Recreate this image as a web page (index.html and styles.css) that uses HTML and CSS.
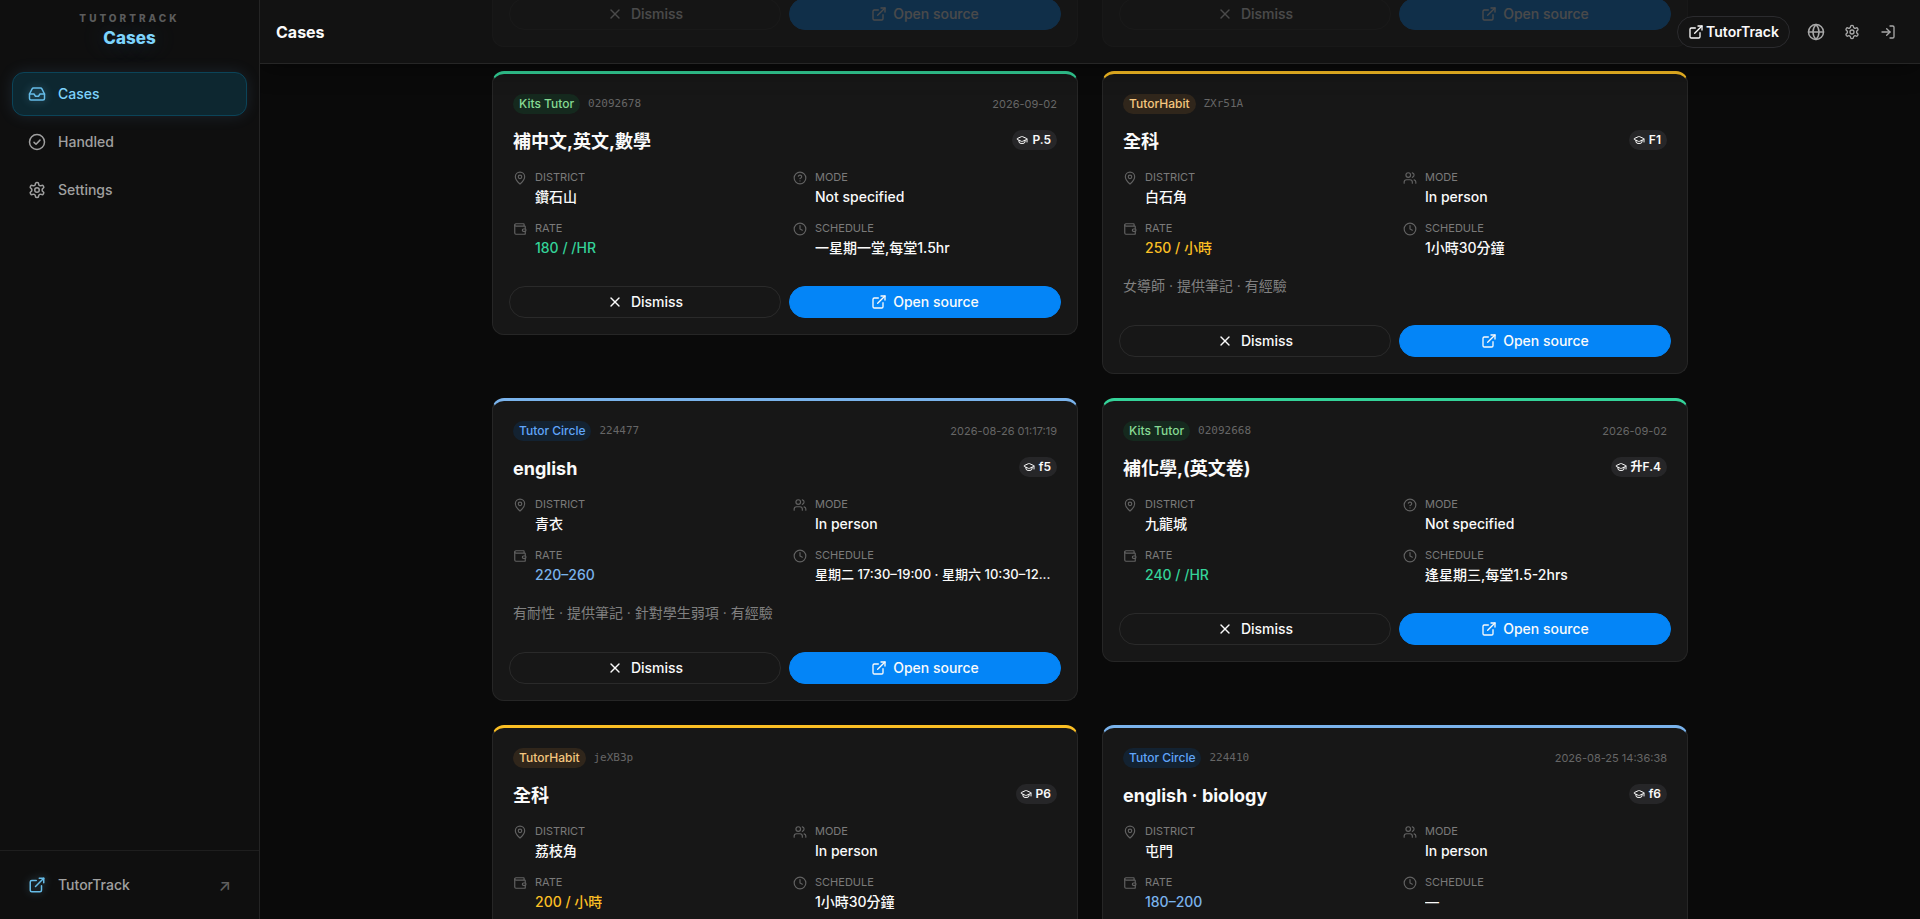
FILE: index.html
```html
<!DOCTYPE html>
<html lang="en">
<head>
    <meta charset="UTF-8">
    <meta name="viewport" content="width=device-width, initial-scale=1.0">
    <title>Cases</title>
    <link rel="stylesheet" href="styles.css">
</head>
<body>
    <!-- icons -->
    <svg class="sprite" aria-hidden="true">
        <symbol id="i-inbox" viewBox="0 0 24 24"><path d="M22 12h-6l-2 3h-4l-2-3H2"/><path d="M5.45 5.11 2 12v6a2 2 0 0 0 2 2h16a2 2 0 0 0 2-2v-6l-3.45-6.89A2 2 0 0 0 16.76 4H7.24a2 2 0 0 0-1.79 1.11z"/></symbol>
        <symbol id="i-check" viewBox="0 0 24 24"><circle cx="12" cy="12" r="10"/><path d="m8 12.5 2.7 2.5L16 9.5"/></symbol>
        <symbol id="i-gear" viewBox="0 0 24 24"><path d="M12.22 2h-.44a2 2 0 0 0-2 2v.18a2 2 0 0 1-1 1.73l-.43.25a2 2 0 0 1-2 0l-.15-.08a2 2 0 0 0-2.73.73l-.22.38a2 2 0 0 0 .73 2.73l.15.1a2 2 0 0 1 1 1.72v.51a2 2 0 0 1-1 1.74l-.15.09a2 2 0 0 0-.73 2.73l.22.38a2 2 0 0 0 2.73.73l.15-.08a2 2 0 0 1 2 0l.43.25a2 2 0 0 1 1 1.73V20a2 2 0 0 0 2 2h.44a2 2 0 0 0 2-2v-.18a2 2 0 0 1 1-1.73l.43-.25a2 2 0 0 1 2 0l.15.08a2 2 0 0 0 2.73-.73l.22-.39a2 2 0 0 0-.73-2.73l-.15-.08a2 2 0 0 1-1-1.74v-.5a2 2 0 0 1 1-1.74l.15-.09a2 2 0 0 0 .73-2.73l-.22-.38a2 2 0 0 0-2.73-.73l-.15.08a2 2 0 0 1-2 0l-.43-.25a2 2 0 0 1-1-1.73V4a2 2 0 0 0-2-2z"/><circle cx="12" cy="12" r="3"/></symbol>
        <symbol id="i-open" viewBox="0 0 24 24"><path d="M15 3h6v6"/><path d="M10 14 21 3"/><path d="M18 13v6a2 2 0 0 1-2 2H5a2 2 0 0 1-2-2V8a2 2 0 0 1 2-2h6"/></symbol>
        <symbol id="i-globe" viewBox="0 0 24 24"><circle cx="12" cy="12" r="10"/><path d="M12 2a14.5 14.5 0 0 0 0 20 14.5 14.5 0 0 0 0-20"/><path d="M2 12h20"/></symbol>
        <symbol id="i-login" viewBox="0 0 24 24"><path d="M15 3h4a2 2 0 0 1 2 2v14a2 2 0 0 1-2 2h-4"/><path d="m10 17 5-5-5-5"/><path d="M15 12H3"/></symbol>
        <symbol id="i-x" viewBox="0 0 24 24"><path d="M18 6 6 18"/><path d="m6 6 12 12"/></symbol>
        <symbol id="i-pin" viewBox="0 0 24 24"><path d="M20 10c0 5-5.54 10.19-7.4 11.8a1 1 0 0 1-1.2 0C9.54 20.19 4 15 4 10a8 8 0 0 1 16 0"/><circle cx="12" cy="10" r="3"/></symbol>
        <symbol id="i-help" viewBox="0 0 24 24"><circle cx="12" cy="12" r="10"/><path d="M9.09 9a3 3 0 0 1 5.83 1c0 2-3 3-3 3"/><path d="M12 17h.01"/></symbol>
        <symbol id="i-users" viewBox="0 0 24 24"><path d="M16 21v-2a4 4 0 0 0-4-4H6a4 4 0 0 0-4 4v2"/><circle cx="9" cy="7" r="4"/><path d="M22 21v-2a4 4 0 0 0-3-3.87"/><path d="M16 3.13a4 4 0 0 1 0 7.75"/></symbol>
        <symbol id="i-wallet" viewBox="0 0 24 24"><path d="M19 7V4a1 1 0 0 0-1-1H5a2 2 0 0 0 0 4h15a1 1 0 0 1 1 1v4h-3a2 2 0 0 0 0 4h3a1 1 0 0 0 1-1v-2a1 1 0 0 0-1-1"/><path d="M3 5v14a2 2 0 0 0 2 2h15a1 1 0 0 0 1-1v-4"/></symbol>
        <symbol id="i-clock" viewBox="0 0 24 24"><circle cx="12" cy="12" r="10"/><path d="M12 6v6l4 2"/></symbol>
        <symbol id="i-cap" viewBox="0 0 24 24"><path d="M21.42 10.92a1 1 0 0 0-.02-1.84L12.83 5.18a2 2 0 0 0-1.66 0L2.6 9.08a1 1 0 0 0 0 1.83l8.57 3.91a2 2 0 0 0 1.66 0z"/><path d="M22 10v6"/><path d="M6 12.5V16a6 3 0 0 0 12 0v-3.5"/></symbol>
    </svg>

    <div class="app">
        <aside class="sidebar">
            <div class="brand">
                <span class="brand-top">TUTORTRACK</span>
                <span class="brand-name">Cases</span>
            </div>
            <nav class="nav">
                <a class="nav-item active" href="#"><svg class="icon"><use href="#i-inbox"/></svg>Cases</a>
                <a class="nav-item" href="#"><svg class="icon"><use href="#i-check"/></svg>Handled</a>
                <a class="nav-item" href="#"><svg class="icon"><use href="#i-gear"/></svg>Settings</a>
            </nav>
            <div class="side-foot">
                <a class="nav-item" href="#"><svg class="icon glow"><use href="#i-open"/></svg>TutorTrack<span class="arrow">↗</span></a>
            </div>
        </aside>

        <div class="main">
            <header class="topbar">
                <h1>Cases</h1>
                <div class="tools">
                    <a class="pill" href="#"><svg class="icon"><use href="#i-open"/></svg>TutorTrack</a>
                    <button class="tool globe" aria-label="Language"><svg class="icon"><use href="#i-globe"/></svg></button>
                    <button class="tool" aria-label="Settings"><svg class="icon"><use href="#i-gear"/></svg></button>
                    <button class="tool" aria-label="Sign in"><svg class="icon"><use href="#i-login"/></svg></button>
                </div>
            </header>
            <main class="cases" id="cases"></main>
        </div>
    </div>

    <script src="script.js"></script>
</body>
</html>
```
FILE: styles.css
```css
*{
    margin: 0;
    padding: 0;
    box-sizing: border-box;
}
body{
    height: 100vh;
    overflow: hidden;
    background: #0a0a0a;
    color: #fafafa;
    font-family: Inter, "Noto Sans CJK TC", sans-serif;
    font-size: 14px;
    line-height: 20px;
}
a{
    color: inherit;
    text-decoration: none;
}
button{
    font: inherit;
    color: inherit;
    background: none;
    border: none;
}
.sprite{
    display: none;
}
.icon{
    width: 16px;
    height: 16px;
    flex: none;
    fill: none;
    stroke: currentColor;
    stroke-width: 2;
    stroke-linecap: round;
    stroke-linejoin: round;
}
.app{
    display: flex;
    height: 100vh;
}

/* sidebar */
.sidebar{
    display: flex;
    flex-direction: column;
    width: 260px;
    flex: none;
    background: #0f0f0f;
    border-right: 1px solid #242424;
}
.brand{
    display: flex;
    flex-direction: column;
    align-items: center;
    height: 64px;
    padding-top: 11px;
}
.brand-top{
    font-size: 10px;
    line-height: 14px;
    font-weight: 800;
    letter-spacing: 3px;
    color: #5c5c5c;
}
.brand-name{
    font-size: 17px;
    line-height: 26px;
    font-weight: 800;
    color: #7dd3fc;
    text-shadow: 0 0 24px rgba(125, 190, 252, 0.3);
}
.nav{
    display: flex;
    flex-direction: column;
    gap: 4px;
    padding: 8px 12px;
}
.nav-item{
    display: flex;
    align-items: center;
    gap: 12px;
    height: 44px;
    padding: 0 15px;
    border: 1px solid transparent;
    border-radius: 12px;
    font-weight: 500;
    color: #a0a0a0;
}
.nav-item .icon{
    width: 18px;
    height: 18px;
}
.nav-item.active{
    color: #7dd3fc;
    background: #0d2730;
    border-color: #0b4459;
    box-shadow: 0 0 16px rgba(125, 190, 252, 0.12);
}
.nav-item.active .icon, .nav-item .glow{
    color: #66bce8;
    filter: drop-shadow(0 0 4px rgba(125, 211, 252, 0.4));
}
.side-foot{
    margin-top: auto;
    padding: 12px;
    border-top: 1px solid #1e1e1e;
}
.arrow{
    margin-left: auto;
    font-size: 16px;
    color: #606060;
}

/* top bar */
.main{
    flex: 1;
    min-width: 0;
    overflow: hidden;
}
.topbar{
    position: relative;
    z-index: 2;
    display: flex;
    align-items: center;
    justify-content: space-between;
    height: 64px;
    padding: 0 16px;
    background: rgba(21, 21, 21, 0.77);
    border-bottom: 1px solid #262626;
    box-shadow: 0 4px 24px rgba(0, 0, 0, 0.4);
}
.topbar h1{
    font-size: 16px;
    font-weight: 700;
}
.tools{
    display: flex;
    align-items: center;
    gap: 4px;
}
.pill{
    display: flex;
    align-items: center;
    gap: 2px;
    height: 32px;
    margin-right: 6px;
    padding: 0 10px;
    border: 1px solid #2b2b2e;
    border-radius: 16px;
    background: #141414;
    font-weight: 600;
}
.tool{
    display: flex;
    align-items: center;
    justify-content: center;
    width: 32px;
    height: 32px;
    color: #a8a8a8;
}
.globe .icon{
    width: 18px;
    height: 18px;
}

/* case cards, the end of the row above runs under the top bar */
.cases{
    display: grid;
    grid-template-columns: 1fr 1fr;
    gap: 24px;
    align-items: start;
    max-width: 1196px;
    margin: -85px auto 0;
}
.card{
    border: 1px solid #262626;
    border-top: 3px solid var(--accent);
    border-radius: 12px;
    background: #171717;
}
.kits{
    --accent: #34d399;
    --tag: #86d993;
    --tag-bg: #15291e;
}
.habit{
    --accent: #fbbf24;
    --tag: #f5c67f;
    --tag-bg: #30261b;
}
.circle{
    --accent: #7ab3ec;
    --tag: #60a5fa;
    --tag-bg: #132231;
}
.card-body{
    padding: 20px 20px 12px;
}
.meta{
    display: flex;
    align-items: center;
    gap: 8px;
    height: 20px;
    font-size: 11px;
    color: #666666;
}
.tag{
    padding: 0 6px;
    border-radius: 10px;
    font-size: 12px;
    font-weight: 500;
    color: var(--tag);
    background: var(--tag-bg);
}
.code{
    font-family: "DejaVu Sans Mono", monospace;
}
.meta time{
    margin-left: auto;
}
.title-row{
    display: flex;
    align-items: flex-start;
    justify-content: space-between;
    gap: 12px;
    margin: 16px 0;
}
.title-row h2{
    font-size: 18px;
    line-height: 23px;
    font-weight: 700;
}
.grade{
    display: flex;
    align-items: center;
    gap: 4px;
    height: 20px;
    padding: 0 6px 0 4px;
    border-radius: 10px;
    background: #262628;
    font-size: 12px;
    font-weight: 600;
}
.grade .icon{
    width: 12px;
    height: 12px;
}
.facts{
    display: grid;
    grid-template-columns: 1fr 1fr;
    gap: 13px 16px;
}
.fact{
    display: flex;
    gap: 8px;
    min-width: 0;
}
.fact .icon{
    width: 14px;
    height: 14px;
    margin-top: 2px;
    color: #626262;
}
.fact dl{
    min-width: 0;
}
.fact dt{
    margin-bottom: 1px;
    font-size: 11px;
    line-height: 16px;
    color: #7a7a7a;
}
.fact dd{
    overflow: hidden;
    white-space: nowrap;
    text-overflow: ellipsis;
    line-height: 21px;
    font-weight: 500;
}
.fact .rate{
    color: var(--accent);
}
.fact .long{
    font-size: 13px;
}
.note{
    margin-top: 16px;
    line-height: 23px;
    color: #808080;
}
.actions{
    display: flex;
    gap: 8px;
    padding: 16px;
}
.btn{
    flex: 1;
    display: flex;
    align-items: center;
    justify-content: center;
    gap: 8px;
    height: 32px;
    border: 1px solid #2a2a2a;
    border-radius: 16px;
    font-weight: 500;
}
.btn.primary{
    gap: 6px;
    border-color: #0485f7;
    background: #0485f7;
}
```
FILE: script.js
```javascript
const cases = [
    { src: "circle" },
    { src: "habit" },
    { src: "kits", code: "02092678", date: "2026-09-02", title: "補中文,英文,數學", grade: "P.5", district: "鑽石山", mode: "Not specified", rate: "180 / /HR", time: "一星期一堂,每堂1.5hr" },
    { src: "habit", code: "ZXr51A", title: "全科", grade: "F1", district: "白石角", mode: "In person", rate: "250 / 小時", time: "1小時30分鐘", note: "女導師 · 提供筆記 · 有經驗" },
    { src: "circle", code: "224477", date: "2026-08-26 01:17:19", title: "english", grade: "f5", district: "青衣", mode: "In person", rate: "220–260", time: "星期二 17:30–19:00 · 星期六 10:30–12...", note: "有耐性 · 提供筆記 · 針對學生弱項 · 有經驗" },
    { src: "kits", code: "02092668", date: "2026-09-02", title: "補化學,(英文卷)", grade: "升F.4", district: "九龍城", mode: "Not specified", rate: "240 / /HR", time: "逢星期三,每堂1.5-2hrs" },
    { src: "habit", code: "jeXB3p", title: "全科", grade: "P6", district: "荔枝角", mode: "In person", rate: "200 / 小時", time: "1小時30分鐘" },
    { src: "circle", code: "224410", date: "2026-08-25 14:36:38", title: "english · biology", grade: "f6", district: "屯門", mode: "In person", rate: "180–200", time: "—" }
];

const names = { kits: "Kits Tutor", habit: "TutorHabit", circle: "Tutor Circle" };

function icon(name) {
    return `<svg class="icon"><use href="#i-${name}"/></svg>`;
}

function fact(iconName, label, value, cls) {
    return `<div class="fact">${icon(iconName)}<dl><dt>${label}</dt><dd class="${cls || ""}">${value}</dd></dl></div>`;
}

function body(c) {
    return `
        <div class="card-body">
            <div class="meta">
                <span class="tag">${names[c.src]}</span>
                <span class="code">${c.code}</span>
                ${c.date ? `<time>${c.date}</time>` : ""}
            </div>
            <div class="title-row">
                <h2>${c.title}</h2>
                <span class="grade">${icon("cap")}${c.grade}</span>
            </div>
            <div class="facts">
                ${fact("pin", "DISTRICT", c.district)}
                ${fact(c.mode === "In person" ? "users" : "help", "MODE", c.mode)}
                ${fact("wallet", "RATE", c.rate, "rate")}
                ${fact("clock", "SCHEDULE", c.time, c.time.length > 24 ? "long" : "")}
            </div>
            ${c.note ? `<p class="note">${c.note}</p>` : ""}
        </div>`;
}

function card(c) {
    return `
    <article class="card ${c.src}">
        ${c.title ? body(c) : ""}
        <div class="actions">
            <button class="btn">${icon("x")}Dismiss</button>
            <button class="btn primary">${icon("open")}Open source</button>
        </div>
    </article>`;
}

document.getElementById("cases").innerHTML = cases.map(card).join("");
```
